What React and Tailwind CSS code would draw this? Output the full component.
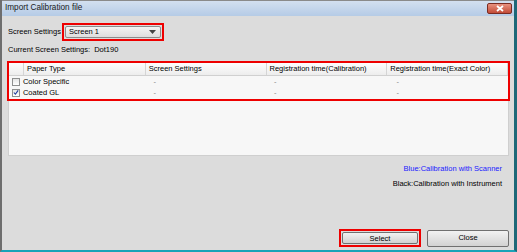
import React from "react";

const rows = [
  { name: "Color Specific", checked: false },
  { name: "Coated GL", checked: true },
];

const Check = ({ checked }) => (
  <span className="w-[8px] h-[8px] border border-[#8e8f8f] bg-gradient-to-b from-[#e4e4e4] to-[#ffffff] flex items-center justify-center">
    {checked && (
      <svg width="7" height="7" viewBox="0 0 7 7">
        <path d="M1 3.5 L2.8 5.5 L6 1" fill="none" stroke="#1f3c9c" strokeWidth="1.3" />
      </svg>
    )}
  </span>
);

const App = () => {
  return (
    <div
      className="w-[517px] h-[252px] overflow-hidden flex flex-col bg-[#dcdcdc] border-l-2 border-l-[#6e6e6e] border-r-[3px] border-r-[#1d6878] border-b-2 border-b-[#1aa3b8] text-black whitespace-nowrap"
      style={{ fontFamily: '"Liberation Sans", Arial, sans-serif' }}
    >
      {/* title bar */}
      <div className="h-[16px] shrink-0 flex items-center justify-between border-t border-[#8a8a8a] bg-gradient-to-b from-[#d3e0f0] to-[#b5cbe6] pl-[3px] pr-[2px]">
        <span className="text-[8.2px] text-[#1a1a1a]">Import Calibration file</span>
        <div className="w-[25px] h-[11px] rounded-[2px] border border-[#7a2b22] bg-gradient-to-b from-[#e8917f] to-[#c24a36] flex items-center justify-center">
          <svg width="8" height="7" viewBox="0 0 8 7">
            <path d="M1 1 L7 6 M7 1 L1 6" stroke="#ffffff" strokeWidth="1.8" />
          </svg>
        </div>
      </div>

      {/* body */}
      <div className="flex-1 flex flex-col pl-[6px] pr-[5px] text-[7.5px]">
        <div className="mt-[7px] flex items-center">
          <span className="w-[54px] shrink-0">Screen Settings</span>
          <div className="w-[102px] h-[18px] border-2 border-[#ee0000] flex items-center p-[1px]">
            <div className="flex-1 h-full border border-[#8c8c8c] rounded-[2px] bg-gradient-to-b from-[#f4f4f4] to-[#dedede] flex items-center justify-between pl-[3px] pr-[4px]">
              <span>Screen 1</span>
              <svg width="7" height="4" viewBox="0 0 7 4">
                <path d="M0 0 L7 0 L3.5 4 Z" fill="#444" />
              </svg>
            </div>
          </div>
        </div>

        <div className="mt-[4px] h-[10px] flex items-center gap-[4px]">
          <span>Current Screen Settings:</span>
          <span>Dot190</span>
        </div>

        {/* table */}
        <div className="mt-[6px] h-[95px] w-[501px] relative bg-[#f7f7f7] border border-[#cfcfcf]">
          <div className="h-[14px] flex bg-gradient-to-b from-[#ffffff] to-[#ededed] border-b border-[#d0d0d0]">
            <div className="w-[15px] border-r border-[#d5d5d5]" />
            <div className="w-[122px] pl-[3px] border-r border-[#d5d5d5] flex items-center">Paper Type</div>
            <div className="w-[122px] pl-[3px] border-r border-[#d5d5d5] flex items-center">Screen Settings</div>
            <div className="w-[120px] pl-[2px] border-r border-[#d5d5d5] flex items-center">Registration time(Calibration)</div>
            <div className="w-[121px] pl-[3px] border-r border-[#d5d5d5] flex items-center">Registration time(Exact Color)</div>
          </div>
          {rows.map((row) => (
            <div key={row.name} className="h-[11px] flex items-center">
              <div className="w-[14px] pl-[3px] flex items-center">
                <Check checked={row.checked} />
              </div>
              <div className="w-[123px]">{row.name}</div>
              <div className="w-[122px] pl-[8px] text-[#888]">-</div>
              <div className="w-[122px] pl-[7px] text-[#888]">-</div>
              <div className="w-[120px] pl-[8px] text-[#888]">-</div>
            </div>
          ))}
          <div className="absolute -left-[2px] -right-[2px] -top-[1px] h-[40px] border-2 border-[#ee0000] pointer-events-none" />
        </div>

        <div className="mt-[8px] flex flex-col items-end pr-[7px] gap-[5px]">
          <span className="text-[#2020ff] h-[10px] flex items-center">Blue:Calibration with Scanner</span>
          <span className="h-[10px] flex items-center">Black:Calibration with Instrument</span>
        </div>

        <div className="mt-auto mb-[3px] flex justify-end items-center gap-[6px]">
          <div className="w-[82px] h-[18px] border-2 border-[#ee0000] p-[1px] flex">
            <button className="flex-1 border border-[#707070] rounded-[2px] bg-gradient-to-b from-[#f2f2f2] to-[#d2d2d2] text-[7.5px]">
              Select
            </button>
          </div>
          <button className="w-[82px] h-[17px] border border-[#707070] rounded-[2px] bg-gradient-to-b from-[#f2f2f2] to-[#d2d2d2] text-[7.5px]">
            Close
          </button>
        </div>
      </div>
    </div>
  );
};

export default App;
